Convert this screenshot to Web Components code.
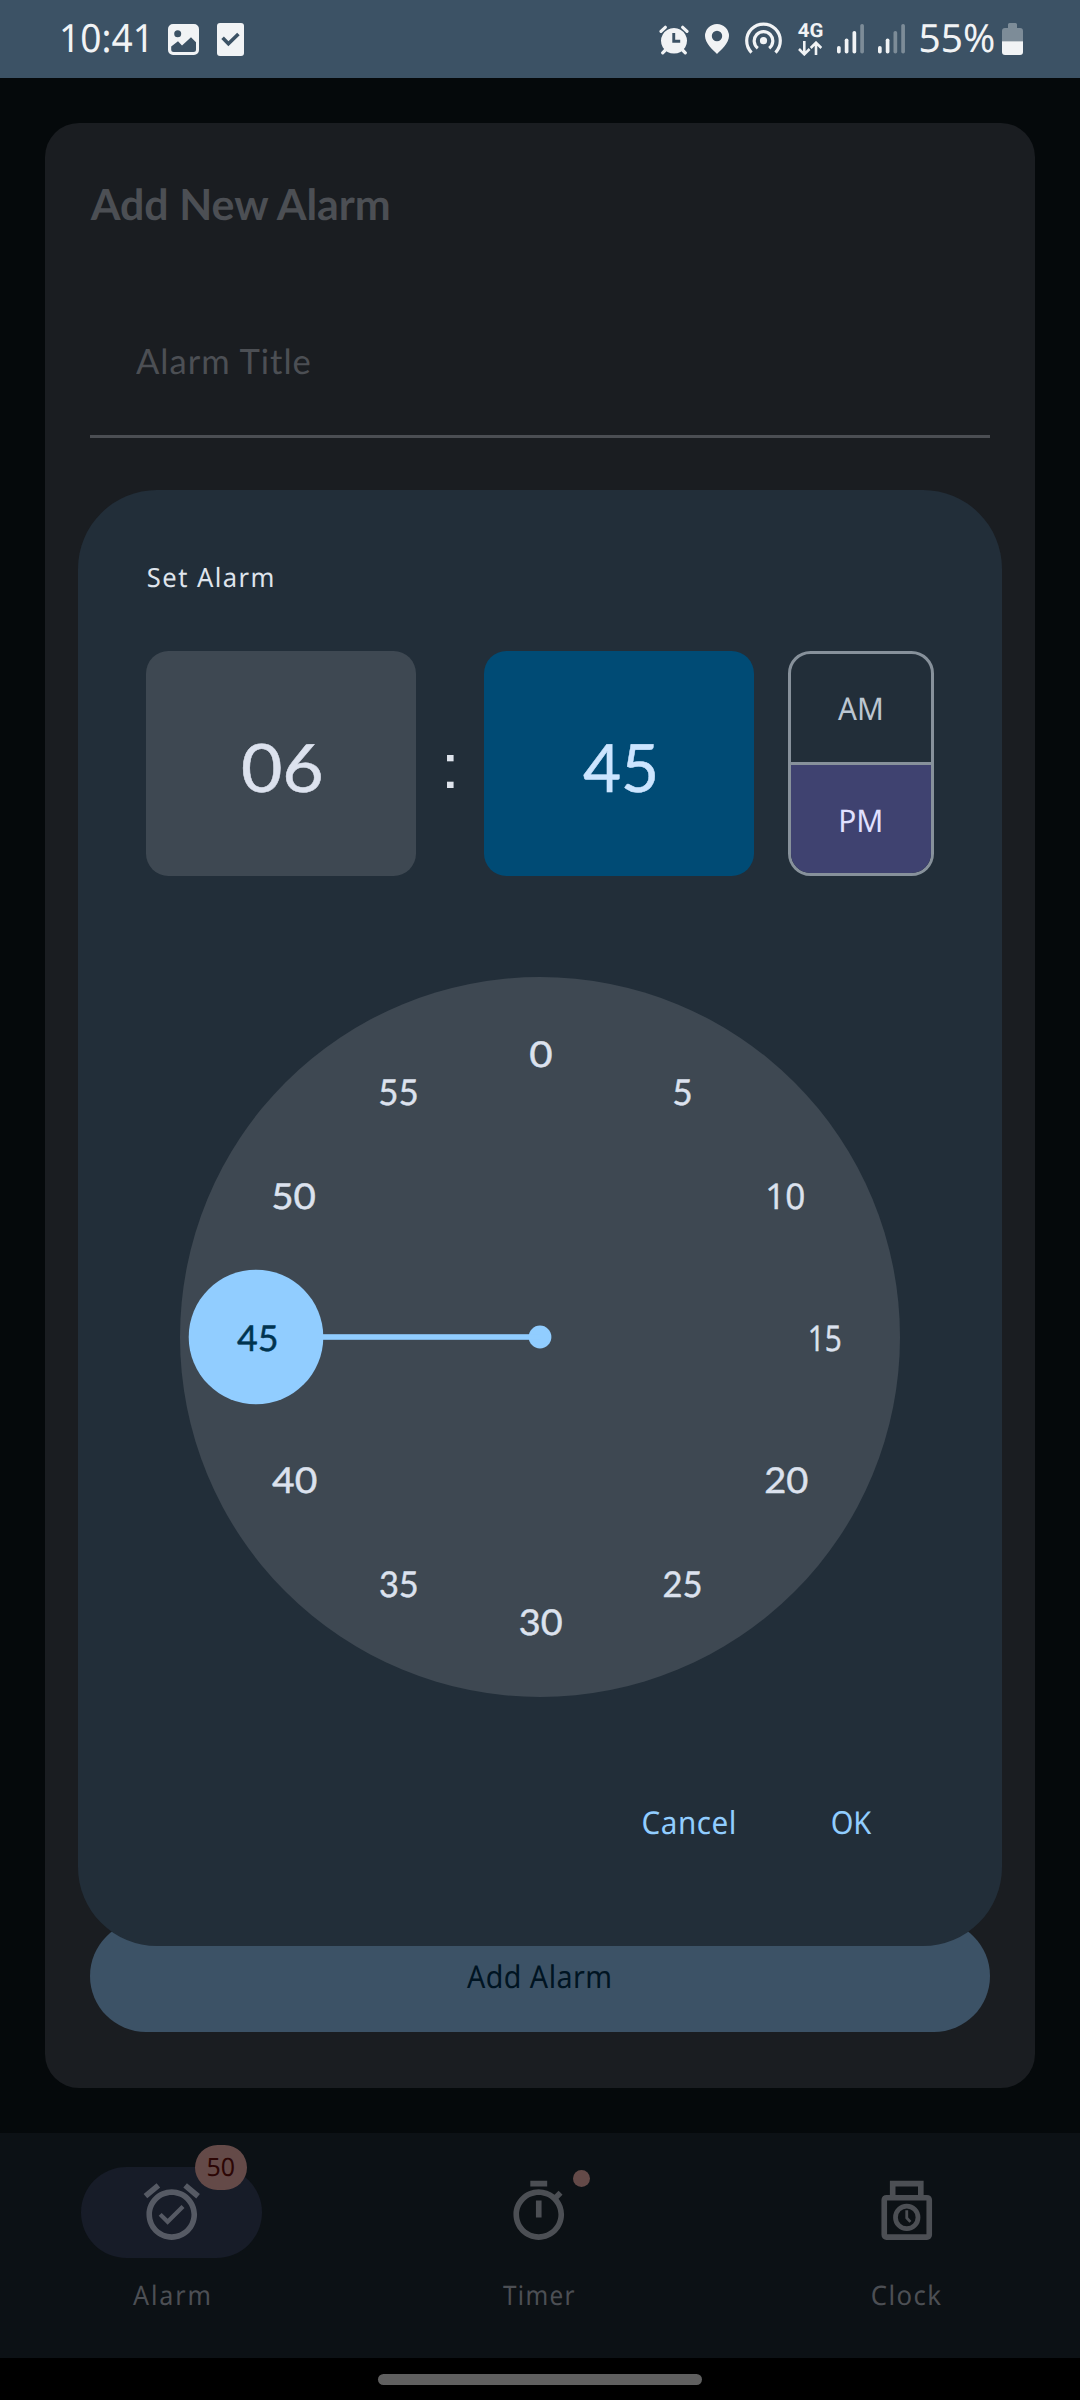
<!DOCTYPE html>
<html lang="en">
<head>
<meta charset="utf-8">
<title>Add New Alarm</title>
<style>
  html, body { margin: 0; background: #05090b; }
  body { width: 1080px; height: 2400px; overflow: hidden; font-family: "Noto Sans", sans-serif; }
</style>
</head>
<body>
<alarm-app></alarm-app>
<script>
const pen = document.createElement('canvas').getContext('2d');

class BaseElement extends HTMLElement {
  connectedCallback() {
    if (this.shadowRoot) return;
    this.attachShadow({ mode: 'open' }).innerHTML = this.render();
    this.ready();
  }
  ready() {}
}

/* Single-line label. Its box is exactly the cap height by the ink width. */
class UiLabel extends BaseElement {
  render() {
    const text = this.textContent.trim();
    const cap = parseFloat(this.getAttribute('cap'));
    const width = parseFloat(this.getAttribute('w'));
    const family = this.getAttribute('font') || 'Noto Sans';
    const weight = this.getAttribute('weight') || '400';
    const spacing = parseFloat(this.getAttribute('spacing') || '0');
    const em = 1000;
    pen.letterSpacing = '0px';
    pen.font = `${weight} ${em}px "${family}"`;
    const size = cap / (pen.measureText('H').actualBoundingBoxAscent / em);
    const k = size / em;
    pen.letterSpacing = spacing / k + 'px';
    const m = pen.measureText(text);
    const sx = width / ((m.actualBoundingBoxRight + m.actualBoundingBoxLeft) * k);
    this.cap = cap;
    this.sx = sx;
    this.dx = m.actualBoundingBoxLeft * k * sx;
    return `<style>
      :host { display: block; flex: none; width: ${width}px; height: ${cap}px; }
      span { display: block; width: max-content; white-space: nowrap; text-rendering: geometricPrecision;
        font: ${weight} ${size}px/${cap}px "${family}", sans-serif; letter-spacing: ${spacing}px;
        transform-origin: 0 0; }
      i { display: inline-block; width: 0; height: 0; }
    </style><span><slot></slot><i></i></span>`;
  }
  ready() {
    const span = this.shadowRoot.querySelector('span');
    const base = this.shadowRoot.querySelector('i').getBoundingClientRect().bottom - span.getBoundingClientRect().top;
    span.style.transform = `translate(${this.dx}px, ${this.cap - base}px) scaleX(${this.sx})`;
  }
}
customElements.define('ui-label', UiLabel);

customElements.define('status-bar', class extends BaseElement {
  bars(lit) {
    return [7.5, 15, 22.5, 29.5].map((h, i) =>
      `<rect x="${i * 7.75}" y="${29.5 - h}" width="3.7" height="${h}" rx="1.8" fill-opacity="${i < lit ? 1 : .36}"/>`).join('');
  }
  render() {
    return `<style>
      :host { display: flex; justify-content: space-between; height: 78px; box-sizing: border-box;
        padding: 0 57px 0 60px; background: #3c5265; color: #f1f3f5; }
      .left, .right { display: flex; align-items: flex-start; }
      svg { display: block; flex: none; fill: #f1f3f5; }
      .net { display: flex; flex-direction: column; gap: 3.5px; margin: 23.3px 14.5px 0 16.5px; }
    </style>
    <div class="left">
      <ui-label cap="28" w="84" style="margin:24.3px .5px 0 1.5px">10:41</ui-label>
      <svg width="31" height="31" viewBox="0 0 31 31" style="margin:24px 0 0 22px"><path fill-rule="evenodd" d="M5 0h21a5 5 0 0 1 5 5v21a5 5 0 0 1-5 5H5a5 5 0 0 1-5-5V5a5 5 0 0 1 5-5zM9.7 6.2a3.5 3.5 0 1 0 0 7 3.5 3.5 0 1 0 0-7zM3.200 22.500V25.500a2.500 2.500 0 0 0 2.500 2.500H25.500a2.500 2.500 0 0 0 2.500-2.500V18.200L23 13.200 14 21.500 10 17.300z"/></svg>
      <svg width="27" height="33" viewBox="0 0 27 33" style="margin:23px 0 0 18px"><rect width="27" height="33" rx="3"/><path d="M5.600 14.800L11.400 20.700 21.400 11" fill="none" stroke="#3c5265" stroke-width="3.600"/></svg>
    </div>
    <div class="right">
      <svg width="30" height="30" viewBox="0 0 30 30" style="margin-top:24.500px"><path fill-rule="evenodd" d="M15 3a13 12.800 0 1 0 .01 0zM13.300 8h2.900v6.700h5v3H13.300z"/><path d="M2 6.300L6.300 2.300M28 6.300L23.700 2.300M6.500 25L3.700 27.800M23.500 25L26.300 27.800" stroke="#f1f3f5" stroke-width="3.200" stroke-linecap="round"/></svg>
      <svg width="24" height="30" viewBox="0 0 24 30" style="margin:23.500px 0 0 16px"><path fill-rule="evenodd" d="M12 0a12 12 0 0 1 12 12c0 7-8 14-12 18C8 26 0 19 0 12A12 12 0 0 1 12 0zM12 6.800a5.200 5.200 0 1 0 0 10.400 5.200 5.200 0 1 0 0-10.400z"/></svg>
      <svg width="37" height="32" viewBox="0 0 37 32" style="margin:22px 0 0 16px"><circle cx="18.500" cy="18.700" r="3.600"/><path fill="none" stroke="#f1f3f5" stroke-width="3.200" d="M12.800 26.200A9.300 9.300 0 1 1 24.200 26.200M6.500 30.600A16.800 16.800 0 1 1 30.500 30.600"/></svg>
      <div class="net">
        <ui-label cap="14" w="24.500" font="Roboto" weight="700">4G</ui-label>
        <svg width="24" height="15" viewBox="0 0 24 15"><path fill="none" stroke="#f1f3f5" stroke-width="2.600" d="M6.300 0v13M1 8l5.300 5.300L11.600 8M18 14V1.500M12.700 7L18 1.700 23.300 7"/></svg>
      </div>
      <svg width="27" height="30" viewBox="0 0 27 30" style="margin-top:23.700px">${this.bars(3)}</svg>
      <svg width="27" height="30" viewBox="0 0 27 30" style="margin:23.700px 16px 0 14px">${this.bars(2)}</svg>
      <ui-label cap="28" w="73" style="margin-top:24.300px">55%</ui-label>
      <svg width="21" height="32" viewBox="0 0 21 32" style="margin:22.700px 0 0 8px"><path fill-opacity=".36" d="M0 18.300V8a3 3 0 0 1 3-3h3V1.500A1.500 1.500 0 0 1 7.500 0h6A1.500 1.500 0 0 1 15 1.500V5h3a3 3 0 0 1 3 3V18.300z"/><path d="M0 18.300H21V29a3 3 0 0 1-3 3H3a3 3 0 0 1-3-3z"/></svg>
    </div>`;
  }
});

customElements.define('alarm-card', class extends BaseElement {
  render() {
    return `<style>
      :host { display: flex; flex-direction: column; margin: 45px; height: 1965px; box-sizing: border-box;
        padding: 65px 45px 56px; border-radius: 34px; background: #1a1d21; color: #4c4f54; }
      .field { margin-top: 62.500px; height: 156px; border-bottom: 3px solid #4b4e53; box-sizing: border-box; padding: 66.500px 46px 0; }
      .button { margin-top: auto; height: 112.500px; border-radius: 57px; background: #3c5266; color: #001422;
        display: flex; align-items: center; justify-content: center; flex: none; }
    </style>
    <ui-label cap="31.500" w="301.500" font="Lato" weight="700">Add New Alarm</ui-label>
    <div class="field"><ui-label cap="25" w="175" font="Lato" spacing="1">Alarm Title</ui-label></div>
    <div class="button"><ui-label cap="22.500" w="143" spacing=".5" style="margin-left:-3px;margin-top:1px">Add Alarm</ui-label></div>`;
  }
});

customElements.define('clock-dial', class extends BaseElement {
  render() {
    const widths = [22, 16.5, 36, 30, 41.7, 36.2, 42, 36.5, 44.6, 39.3, 42.2, 36.5];
    const marks = widths.map((w, i) => {
      const a = i * Math.PI / 6, n = i * 5;
      const x = 360.5 + 284 * Math.sin(a), y = 360.8 - 284 * Math.cos(a);
      const font = (n === 10 || n === 15) ? 'Open Sans' : 'Lato';
      return `<ui-label class="${n === 45 ? 'on' : ''}" cap="25.500" w="${w}" font="${font}"
        style="left:${x - w / 2}px;top:${y - 12.75}px">${n}</ui-label>`;
    }).join('');
    return `<style>
      :host { display: block; position: relative; width: 720px; height: 720px; border-radius: 50%; background: #3e4852; color: #dce2ee; }
      svg { display: block; fill: #91cdff; }
      ui-label { position: absolute; -webkit-text-stroke: .45px currentColor; }
      .on { color: #003450; }
    </style>
    <svg width="720" height="720"><circle cx="360" cy="360" r="11.400"/><rect x="76" y="357.200" width="284" height="5.600"/><circle cx="76" cy="360" r="67.300"/></svg>${marks}`;
  }
});

customElements.define('time-box', class extends BaseElement {
  render() {
    return `<style>
      :host { display: flex; align-items: center; justify-content: center; flex: none; width: 270px; height: 225px;
        box-sizing: border-box; padding-top: 9px; border-radius: 22.500px; background: #3e4852; color: #dce2ee; -webkit-text-stroke: .5px currentColor; }
      :host([selected]) { background: #004b75; color: #cce5ff; }
    </style><slot></slot>`;
  }
});

customElements.define('period-toggle', class extends BaseElement {
  render() {
    return `<style>
      :host { display: flex; flex-direction: column; width: 146px; height: 225px; box-sizing: border-box;
        border: 3px solid #87919b; border-radius: 22.500px; overflow: hidden; color: #bcc6d1; }
      div { flex: 1; display: flex; align-items: center; justify-content: center; }
      .pm { background: #3f4270; border-top: 3px solid #87919b; color: #e0e0ff; }
    </style>
    <div><ui-label cap="22.500" w="43" style="margin:1px 2.500px 0 0">AM</ui-label></div>
    <div class="pm"><ui-label cap="22.500" w="39.500" style="margin:2px 0 0 0">PM</ui-label></div>`;
  }
});

customElements.define('time-dialog', class extends BaseElement {
  render() {
    return `<style>
      :host { position: absolute; left: 78px; top: 490px; width: 924px; height: 1456px; box-sizing: border-box;
        padding: 78px 68px 0; border-radius: 79px; background: #222e39; color: #dfe4ec; display: flex; flex-direction: column; }
      .time { display: flex; align-items: center; margin-top: 64px; height: 225px; }
      .sep { width: 67.500px; display: flex; justify-content: center; padding-top: 5px; }
      period-toggle { margin-left: 34px; }
      clock-dial { align-self: center; margin-top: 101px; }
      .actions { display: flex; justify-content: flex-end; gap: 97.500px; margin: 114.300px 62.500px 0 0; color: #91cdff; }
    </style>
    <ui-label cap="19" w="124.500" spacing="1.500" style="margin-left:1.500px">Set Alarm</ui-label>
    <div class="time">
      <time-box><ui-label cap="48" w="79.500" font="Lato" style="margin-left:2px">06</ui-label></time-box>
      <div class="sep"><ui-label cap="44" w="7.500" font="Liberation Sans">:</ui-label></div>
      <time-box selected><ui-label cap="48" w="72" font="Lato">45</ui-label></time-box>
      <period-toggle></period-toggle>
    </div>
    <clock-dial></clock-dial>
    <div class="actions">
      <ui-label cap="22.700" w="91.200" spacing=".5">Cancel</ui-label>
      <ui-label cap="22.700" w="39.500">OK</ui-label>
    </div>`;
  }
});

customElements.define('nav-item', class extends BaseElement {
  render() {
    return `<style>
      :host { display: flex; flex: none; flex-direction: column; align-items: center; width: 345px; padding-top: 33.700px; gap: 28.500px; color: #4c4f54; box-sizing: border-box; }
      .pill { position: relative; display: flex; align-items: center; justify-content: center; width: 181px; height: 91px; border-radius: 46px; }
      :host([active]) .pill { background: #171c28; color: #565a64; }
      ::slotted(svg) { display: block; width: 67.500px; height: 67.500px; fill: currentColor; }
    </style>
    <div class="pill"><slot></slot><slot name="badge"></slot></div><slot name="label"></slot>`;
  }
});

customElements.define('count-badge', class extends BaseElement {
  render() {
    return `<style>
      :host { position: absolute; left: 114px; top: -21.700px; width: 52px; height: 45px; border-radius: 22.500px;
        background: #644a48; color: #2c0605; display: flex; align-items: center; justify-content: center; }
      :host([dot]) { left: 124.500px; top: 3.300px; width: 17px; height: 17px; border-radius: 50%; }
    </style><slot></slot>`;
  }
});

customElements.define('bottom-nav', class extends BaseElement {
  render() {
    return `<style>
      :host { display: flex; justify-content: center; gap: 22.500px; height: 225px; box-sizing: border-box; padding-right: 2px; background: #0c1115; }
      ui-label[slot] { margin-right: 1px; }
    </style>
    <nav-item active>
      <svg viewBox="0 0 24 24"><path d="M22 5.720l-4.600-3.860-1.290 1.530 4.600 3.860L22 5.720zM7.880 3.390L6.600 1.860 2 5.710l1.290 1.530 4.590-3.850zM12 4c-4.970 0-9 4.030-9 9s4.020 9 9 9c4.970 0 9-4.030 9-9s-4.030-9-9-9zm0 16c-3.870 0-7-3.130-7-7s3.130-7 7-7 7 3.130 7 7-3.130 7-7 7zm-1.460-5.470L8.410 12.400l-1.060 1.060 3.180 3.180 6-6-1.060-1.060-4.930 4.950z"/></svg>
      <count-badge slot="badge"><ui-label cap="18.200" w="26">50</ui-label></count-badge>
      <ui-label slot="label" cap="19.300" w="76" spacing="2">Alarm</ui-label>
    </nav-item>
    <nav-item>
      <svg viewBox="0 0 24 24"><path d="M15 1H9v2h6V1zm-4 13h2V8h-2v6zm8.030-6.610l1.420-1.420c-.430-.510-.900-.990-1.410-1.410l-1.420 1.420C16.070 4.740 14.120 4 12 4c-4.970 0-9 4.030-9 9s4.020 9 9 9 9-4.030 9-9c0-2.120-.740-4.070-1.970-5.610zM12 20c-3.870 0-7-3.130-7-7s3.130-7 7-7 7 3.130 7 7-3.130 7-7 7z"/></svg>
      <count-badge slot="badge" dot></count-badge>
      <ui-label slot="label" cap="19.300" w="71.500" spacing="1.500">Timer</ui-label>
    </nav-item>
    <nav-item>
      <svg viewBox="0 0 24 24"><g fill="none" stroke="currentColor" stroke-width="2"><path d="M7 6V2H17V6"/><rect x="4" y="7" width="16" height="14" rx=".8"/><circle cx="12" cy="14" r="4" stroke-width="1.700"/><path d="M12 11.500V14.200L13.300 15.600" stroke-width="1"/></g></svg>
      <ui-label slot="label" cap="19.300" w="69" spacing="1.500" style="margin-right:0">Clock</ui-label>
    </nav-item>`;
  }
});

customElements.define('gesture-bar', class extends BaseElement {
  render() {
    return `<style>
      :host { display: flex; justify-content: center; height: 42px; box-sizing: border-box; padding-top: 16px; background: #000; }
      div { width: 324px; height: 11px; border-radius: 5.500px; background: #606060; }
    </style><div></div>`;
  }
});

customElements.define('alarm-app', class extends BaseElement {
  render() {
    return `<style>
      :host { display: flex; flex-direction: column; position: relative; width: 1080px; height: 2400px; background: #05090b; }
    </style>
    <status-bar></status-bar><alarm-card></alarm-card><bottom-nav></bottom-nav><gesture-bar></gesture-bar><time-dialog></time-dialog>`;
  }
});
</script>
</body>
</html>
